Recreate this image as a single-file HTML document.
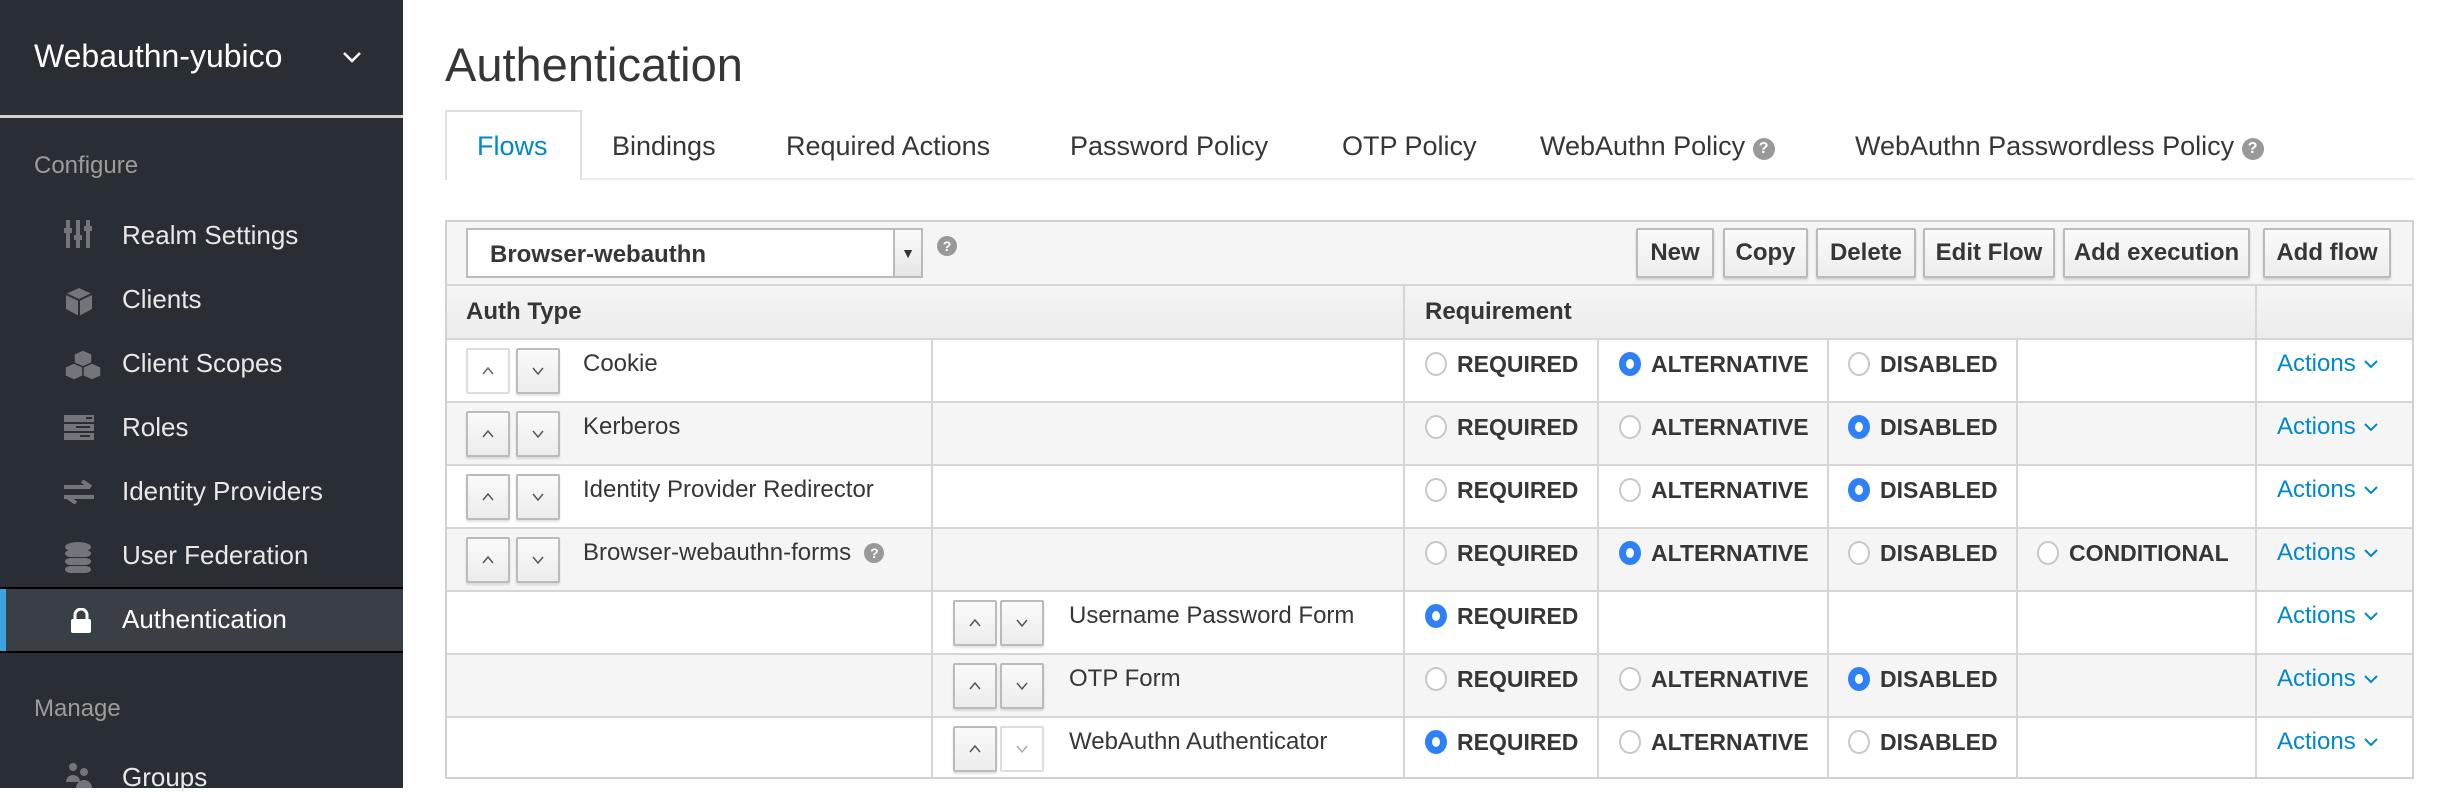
<!DOCTYPE html>
<html><head><meta charset="utf-8">
<style>
*{box-sizing:border-box;margin:0;padding:0}
body{width:2449px;height:788px;overflow:hidden;background:#fff;font-family:"Liberation Sans",sans-serif;position:relative;color:#363636}
.sb{position:absolute;left:0;top:0;width:403px;height:788px;background:#292e34}
.abs{position:absolute;white-space:nowrap}
.si{position:absolute;left:122px;font-size:26px;color:#e8e8e8}
.ic{position:absolute;left:64px}
.tab{position:absolute;top:131px;font-size:27px;color:#363636}
.panel{position:absolute;left:445px;top:220px;width:1969px;height:559px;border:2px solid #d1d1d1;background:#f5f5f5}
.btn{position:absolute;top:228px;height:50px;border:2px solid #bbb;border-radius:2px;background:linear-gradient(#fafafa,#ededed);font-size:24px;font-weight:bold;color:#363636;text-align:center;line-height:46px;box-shadow:0 2px 2px rgba(0,0,0,.15)}
.row{position:absolute;left:447px;width:1965px;height:63px;border-top:2px solid #d6d6d6}
.vl{position:absolute;top:0;bottom:0;width:2px;background:#d6d6d6}
.ar{position:absolute;width:44px;height:46px;border:2px solid #bbb;border-radius:2px;background:linear-gradient(#fafafa,#ececec);box-shadow:0 2px 2px rgba(0,0,0,.12)}
.ar svg{position:absolute;left:14px;top:16px}
.nm{position:absolute;top:10px;font-size:24px;color:#363636}
.rd{position:absolute;top:9px;font-size:23px;font-weight:bold;color:#363636;padding-left:32px;line-height:30px}
.rd:before{content:"";position:absolute;left:0;top:3px;width:22px;height:24px;border-radius:50%;border:2px solid #c8c8c8;background:#fff;box-sizing:border-box}
.rd.on:before{border:7px solid #2e80f7;background:#fff}
.act{position:absolute;left:1830px;top:10px;font-size:24px;color:#0088ce}
.act svg{margin-left:8px;vertical-align:2px}
.hq{display:inline-block;width:22px;height:22px;border-radius:50%;background:#999;color:#fff;font-size:16px;font-weight:bold;text-align:center;line-height:22px;vertical-align:2px}
</style></head><body>
<div class="sb">
 <div class="abs" style="left:34px;top:38px;font-size:32px;color:#fff">Webauthn-yubico</div>
 <svg class="abs" style="left:342px;top:50px" width="20" height="14"><path d="M2 3 L10 11 L18 3" stroke="#fff" stroke-width="2.5" fill="none"/></svg>
 <div class="abs" style="left:0;top:115px;width:403px;height:3px;background:#d1d1d1"></div>
 <div class="abs" style="left:34px;top:152px;font-size:24px;color:#9c9c9c">Configure</div>
 <svg class="ic" style="top:220px" width="30" height="28"><g fill="#72767b"><rect x="2" y="0" width="4" height="28"/><rect x="12" y="0" width="4" height="28"/><rect x="22" y="0" width="4" height="28"/><rect x="0" y="8" width="8" height="5"/><rect x="10" y="15" width="8" height="5"/><rect x="20" y="6" width="8" height="5"/></g></svg>
 <div class="si" style="top:220px">Realm Settings</div>
 <svg class="ic" style="top:287px" width="30" height="30"><path d="M15 1 L28 7 L28 22 L15 29 L2 22 L2 7 Z" fill="#72767b"/><path d="M2 7 L15 13 L28 7 M15 13 L15 29" stroke="#292e34" stroke-width="2" fill="none"/></svg>
 <div class="si" style="top:284px">Clients</div>
 <svg class="ic" style="top:349px" width="38" height="32"><g fill="#72767b" stroke="#292e34" stroke-width="1.5"><path d="M19 1 L28 5 L28 14 L19 18 L10 14 L10 5Z"/><path d="M10 14 L19 18 L19 27 L10 31 L1 27 L1 18Z"/><path d="M28 14 L37 18 L37 27 L28 31 L19 27 L19 18Z"/></g></svg>
 <div class="si" style="top:348px">Client Scopes</div>
 <svg class="ic" style="top:415px" width="30" height="26"><g fill="#72767b"><rect x="0" y="0" width="30" height="7"/><rect x="0" y="9" width="30" height="7"/><rect x="0" y="18" width="30" height="7"/></g><g fill="#292e34"><rect x="22" y="2" width="6" height="2"/><rect x="12" y="11" width="14" height="2"/><rect x="16" y="20" width="10" height="2"/></g></svg>
 <div class="si" style="top:412px">Roles</div>
 <svg class="ic" style="top:480px" width="30" height="24"><path d="M0 7 H26 M18 1 L27 7 M0 17 H30 M3 17 L12 23" stroke="#72767b" stroke-width="4" fill="none"/></svg>
 <div class="si" style="top:476px">Identity Providers</div>
 <svg class="ic" style="top:542px" width="30" height="32"><g fill="#72767b"><ellipse cx="14" cy="5" rx="13" ry="5"/><rect x="1" y="8" width="26" height="7" rx="6"/><rect x="1" y="16" width="26" height="7" rx="6"/><rect x="1" y="24" width="26" height="7" rx="6"/></g></svg>
 <div class="si" style="top:540px">User Federation</div>
 <div class="abs" style="left:0;top:587px;width:403px;height:66px;background:#393f44;border-top:2px solid #000;border-bottom:2px solid #000"></div>
 <div class="abs" style="left:0;top:589px;width:6px;height:62px;background:#39a5dc"></div>
 <svg class="ic" style="top:608px;left:70px" width="22" height="26"><path d="M5 11 V7 a6 6 0 0 1 12 0 V11" stroke="#fff" stroke-width="3" fill="none"/><rect x="1" y="11" width="20" height="14" rx="2" fill="#fff"/></svg>
 <div class="si" style="top:604px;color:#fff">Authentication</div>
 <div class="abs" style="left:34px;top:695px;font-size:24px;color:#9c9c9c">Manage</div>
 <svg class="ic" style="top:762px" width="32" height="26"><g fill="#72767b"><circle cx="9" cy="5" r="4"/><circle cx="20" cy="10" r="4"/><path d="M2 20 a7 7 0 0 1 14 0Z"/><path d="M12 26 a8 8 0 0 1 16 0Z"/></g></svg>
 <div class="si" style="top:762px">Groups</div>
</div>

<div class="abs" style="left:445px;top:37px;font-size:47px;color:#363636">Authentication</div>
<div class="abs" style="left:445px;top:178px;width:1969px;height:2px;background:#ececec"></div>
<div class="abs" style="left:445px;top:110px;width:137px;height:70px;border:2px solid #e0e0e0;border-bottom:none;background:#fff"></div>
<div class="tab" style="left:477px;color:#0088ce">Flows</div>
<div class="tab" style="left:612px">Bindings</div>
<div class="tab" style="left:786px">Required Actions</div>
<div class="tab" style="left:1070px">Password Policy</div>
<div class="tab" style="left:1342px">OTP Policy</div>
<div class="tab" style="left:1540px">WebAuthn Policy <span class="hq">?</span></div>
<div class="tab" style="left:1855px">WebAuthn Passwordless Policy <span class="hq">?</span></div>

<div class="panel"></div>
<div class="abs" style="left:466px;top:228px;width:457px;height:50px;border:2px solid #bbb;background:#fff;font-size:24px;font-weight:bold;padding:11px 0 0 22px">Browser-webauthn</div>
<div class="abs" style="left:893px;top:230px;width:28px;height:46px;background:linear-gradient(#fafafa,#e6e6e6);border-left:2px solid #bbb;font-size:14px;text-align:center;line-height:46px">▼</div>
<div class="abs" style="left:937px;top:236px"><span class="hq" style="width:20px;height:20px;line-height:20px;font-size:14px">?</span></div>
<div class="btn" style="left:1636px;width:78px">New</div>
<div class="btn" style="left:1723px;width:85px">Copy</div>
<div class="btn" style="left:1816px;width:100px">Delete</div>
<div class="btn" style="left:1923px;width:132px">Edit Flow</div>
<div class="btn" style="left:2063px;width:187px">Add execution</div>
<div class="btn" style="left:2263px;width:128px">Add flow</div>

<div class="row" style="top:284px;height:54px;background:linear-gradient(#f5f5f5,#ececec)">
 <div class="vl" style="left:956px"></div><div class="vl" style="left:1808px"></div>
 <div class="nm" style="left:19px;top:12px;font-weight:bold">Auth Type</div>
 <div class="nm" style="left:978px;top:12px;font-weight:bold">Requirement</div>
</div>

<div class="row" style="top:338px;background:#fff">
 <div class="vl" style="left:484px"></div><div class="vl" style="left:956px"></div><div class="vl" style="left:1150px"></div><div class="vl" style="left:1380px"></div><div class="vl" style="left:1569px"></div><div class="vl" style="left:1808px"></div>
 <div class="ar" style="left:19px;top:8px;border-color:#ddd;background:#fff;box-shadow:none"><svg width="12" height="10"><path d="M1 8 L6 2 L11 8" stroke="#666" stroke-width="1.5" fill="none"/></svg></div><div class="ar" style="left:69px;top:8px"><svg width="12" height="10"><path d="M1 2 L6 8 L11 2" stroke="#555" stroke-width="1.5" fill="none"/></svg></div>
 <div class="nm" style="left:136px">Cookie</div>
 <div class="rd" style="left:978px">REQUIRED</div><div class="rd on" style="left:1172px">ALTERNATIVE</div><div class="rd" style="left:1401px">DISABLED</div>
 <div class="act">Actions<svg width="14" height="9"><path d="M1 1 L7 7 L13 1" stroke="#0088ce" stroke-width="2" fill="none"/></svg></div>
</div>
<div class="row" style="top:401px;background:#f5f5f5">
 <div class="vl" style="left:484px"></div><div class="vl" style="left:956px"></div><div class="vl" style="left:1150px"></div><div class="vl" style="left:1380px"></div><div class="vl" style="left:1569px"></div><div class="vl" style="left:1808px"></div>
 <div class="ar" style="left:19px;top:8px"><svg width="12" height="10"><path d="M1 8 L6 2 L11 8" stroke="#555" stroke-width="1.5" fill="none"/></svg></div><div class="ar" style="left:69px;top:8px"><svg width="12" height="10"><path d="M1 2 L6 8 L11 2" stroke="#555" stroke-width="1.5" fill="none"/></svg></div>
 <div class="nm" style="left:136px">Kerberos</div>
 <div class="rd" style="left:978px">REQUIRED</div><div class="rd" style="left:1172px">ALTERNATIVE</div><div class="rd on" style="left:1401px">DISABLED</div>
 <div class="act">Actions<svg width="14" height="9"><path d="M1 1 L7 7 L13 1" stroke="#0088ce" stroke-width="2" fill="none"/></svg></div>
</div>
<div class="row" style="top:464px;background:#fff">
 <div class="vl" style="left:484px"></div><div class="vl" style="left:956px"></div><div class="vl" style="left:1150px"></div><div class="vl" style="left:1380px"></div><div class="vl" style="left:1569px"></div><div class="vl" style="left:1808px"></div>
 <div class="ar" style="left:19px;top:8px"><svg width="12" height="10"><path d="M1 8 L6 2 L11 8" stroke="#555" stroke-width="1.5" fill="none"/></svg></div><div class="ar" style="left:69px;top:8px"><svg width="12" height="10"><path d="M1 2 L6 8 L11 2" stroke="#555" stroke-width="1.5" fill="none"/></svg></div>
 <div class="nm" style="left:136px">Identity Provider Redirector</div>
 <div class="rd" style="left:978px">REQUIRED</div><div class="rd" style="left:1172px">ALTERNATIVE</div><div class="rd on" style="left:1401px">DISABLED</div>
 <div class="act">Actions<svg width="14" height="9"><path d="M1 1 L7 7 L13 1" stroke="#0088ce" stroke-width="2" fill="none"/></svg></div>
</div>
<div class="row" style="top:527px;background:#f5f5f5">
 <div class="vl" style="left:484px"></div><div class="vl" style="left:956px"></div><div class="vl" style="left:1150px"></div><div class="vl" style="left:1380px"></div><div class="vl" style="left:1569px"></div><div class="vl" style="left:1808px"></div>
 <div class="ar" style="left:19px;top:8px"><svg width="12" height="10"><path d="M1 8 L6 2 L11 8" stroke="#555" stroke-width="1.5" fill="none"/></svg></div><div class="ar" style="left:69px;top:8px"><svg width="12" height="10"><path d="M1 2 L6 8 L11 2" stroke="#555" stroke-width="1.5" fill="none"/></svg></div>
 <div class="nm" style="left:136px">Browser-webauthn-forms &nbsp;<span class="hq" style="width:20px;height:20px;line-height:20px;font-size:14px">?</span></div>
 <div class="rd" style="left:978px">REQUIRED</div><div class="rd on" style="left:1172px">ALTERNATIVE</div><div class="rd" style="left:1401px">DISABLED</div><div class="rd" style="left:1590px">CONDITIONAL</div>
 <div class="act">Actions<svg width="14" height="9"><path d="M1 1 L7 7 L13 1" stroke="#0088ce" stroke-width="2" fill="none"/></svg></div>
</div>
<div class="row" style="top:590px;background:#fff">
 <div class="vl" style="left:484px"></div><div class="vl" style="left:956px"></div><div class="vl" style="left:1150px"></div><div class="vl" style="left:1380px"></div><div class="vl" style="left:1569px"></div><div class="vl" style="left:1808px"></div>
 <div class="ar" style="left:506px;top:8px"><svg width="12" height="10"><path d="M1 8 L6 2 L11 8" stroke="#555" stroke-width="1.5" fill="none"/></svg></div><div class="ar" style="left:553px;top:8px"><svg width="12" height="10"><path d="M1 2 L6 8 L11 2" stroke="#555" stroke-width="1.5" fill="none"/></svg></div>
 <div class="nm" style="left:622px">Username Password Form</div>
 <div class="rd on" style="left:978px">REQUIRED</div>
 <div class="act">Actions<svg width="14" height="9"><path d="M1 1 L7 7 L13 1" stroke="#0088ce" stroke-width="2" fill="none"/></svg></div>
</div>
<div class="row" style="top:653px;background:#f5f5f5">
 <div class="vl" style="left:484px"></div><div class="vl" style="left:956px"></div><div class="vl" style="left:1150px"></div><div class="vl" style="left:1380px"></div><div class="vl" style="left:1569px"></div><div class="vl" style="left:1808px"></div>
 <div class="ar" style="left:506px;top:8px"><svg width="12" height="10"><path d="M1 8 L6 2 L11 8" stroke="#555" stroke-width="1.5" fill="none"/></svg></div><div class="ar" style="left:553px;top:8px"><svg width="12" height="10"><path d="M1 2 L6 8 L11 2" stroke="#555" stroke-width="1.5" fill="none"/></svg></div>
 <div class="nm" style="left:622px">OTP Form</div>
 <div class="rd" style="left:978px">REQUIRED</div><div class="rd" style="left:1172px">ALTERNATIVE</div><div class="rd on" style="left:1401px">DISABLED</div>
 <div class="act">Actions<svg width="14" height="9"><path d="M1 1 L7 7 L13 1" stroke="#0088ce" stroke-width="2" fill="none"/></svg></div>
</div>
<div class="row" style="top:716px;height:63px;background:#fff;border-bottom:2px solid #d1d1d1">
 <div class="vl" style="left:484px"></div><div class="vl" style="left:956px"></div><div class="vl" style="left:1150px"></div><div class="vl" style="left:1380px"></div><div class="vl" style="left:1569px"></div><div class="vl" style="left:1808px"></div>
 <div class="ar" style="left:506px;top:8px"><svg width="12" height="10"><path d="M1 8 L6 2 L11 8" stroke="#555" stroke-width="1.5" fill="none"/></svg></div><div class="ar" style="left:553px;top:8px;border-color:#ddd;background:#fff;box-shadow:none"><svg width="12" height="10"><path d="M1 2 L6 8 L11 2" stroke="#aaa" stroke-width="1.5" fill="none"/></svg></div>
 <div class="nm" style="left:622px">WebAuthn Authenticator</div>
 <div class="rd on" style="left:978px">REQUIRED</div><div class="rd" style="left:1172px">ALTERNATIVE</div><div class="rd" style="left:1401px">DISABLED</div>
 <div class="act">Actions<svg width="14" height="9"><path d="M1 1 L7 7 L13 1" stroke="#0088ce" stroke-width="2" fill="none"/></svg></div>
</div>
</body></html>
